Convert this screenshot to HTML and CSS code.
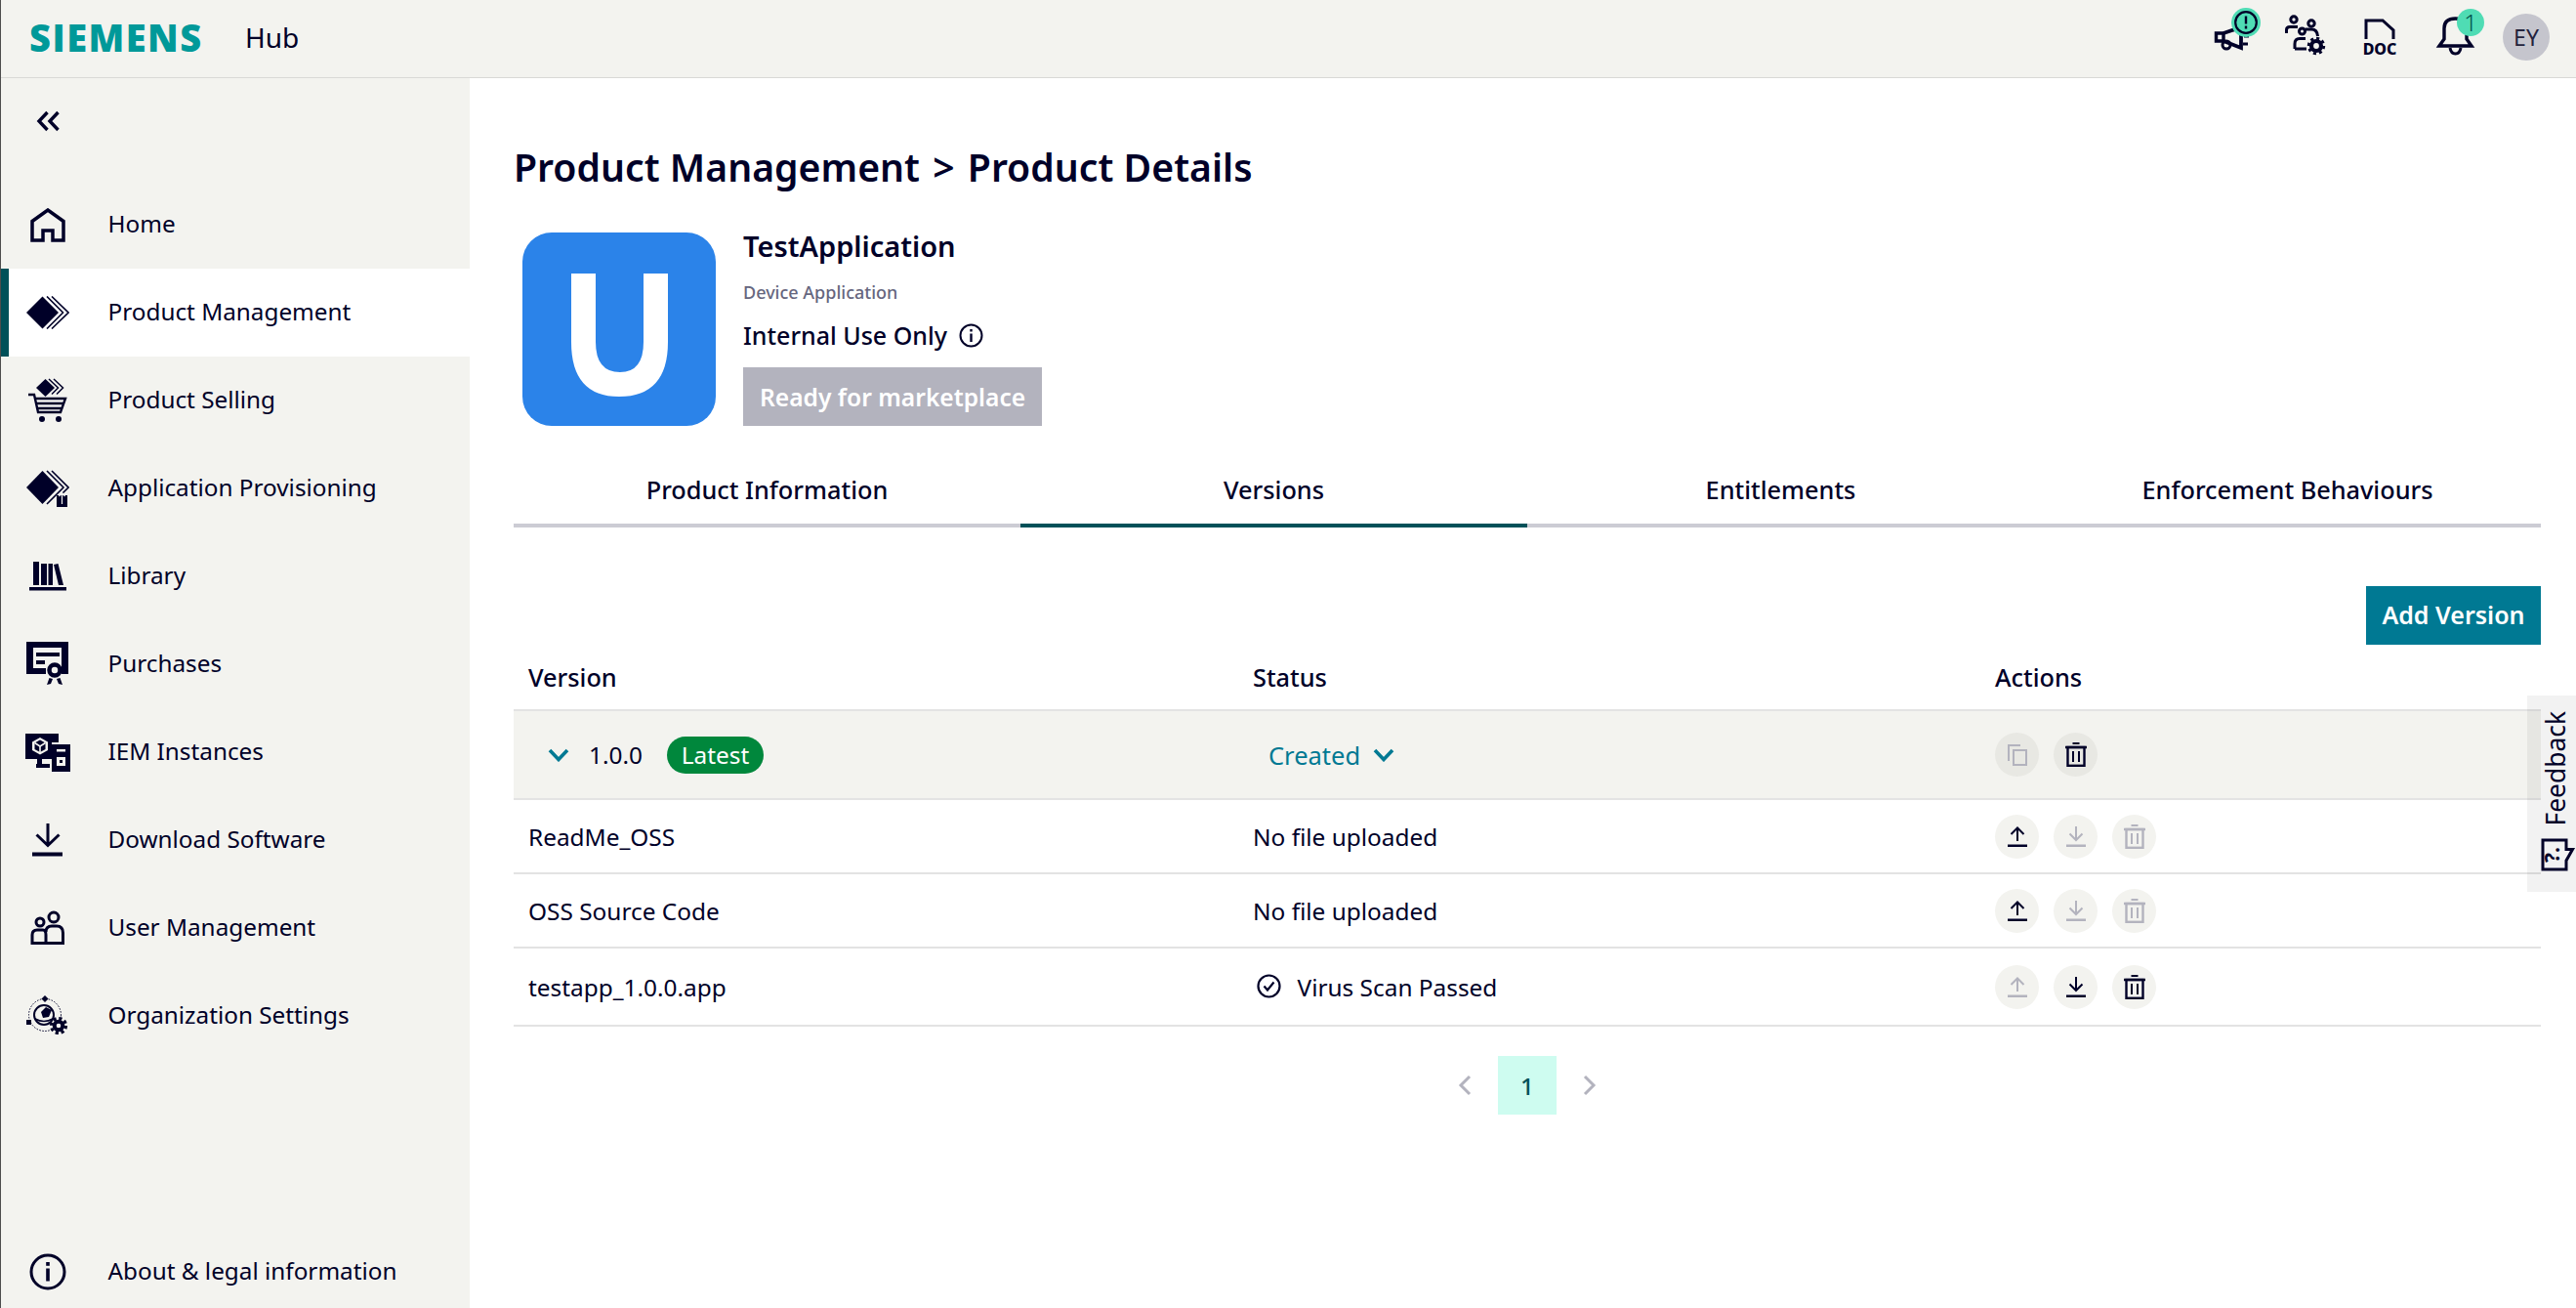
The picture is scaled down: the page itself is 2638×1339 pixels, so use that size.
FILE: index.html
```html
<!DOCTYPE html>
<html lang="en">
<head>
<meta charset="utf-8">
<title>Siemens Hub</title>
<link rel="stylesheet" href="styles.css">
</head>
<body>
<svg class="sprite" aria-hidden="true">
  <symbol id="i-upload" viewBox="0 0 20 21"><path d="M10 15V1.500M3.500 8L10 1.500L16.500 8" fill="none" stroke="currentColor" stroke-width="2"/><rect y="18.500" width="20" height="2.500" fill="currentColor"/></symbol>
  <symbol id="i-download" viewBox="0 0 20 21"><path d="M10 0V14M3.500 7.500L10 14L16.500 7.500" fill="none" stroke="currentColor" stroke-width="2"/><rect y="18.500" width="20" height="2.500" fill="currentColor"/></symbol>
  <symbol id="i-trash" viewBox="0 0 22 25"><path d="M7.500 1H14.500" stroke="currentColor" stroke-width="2"/><path d="M0 5H22" stroke="currentColor" stroke-width="2.500"/><rect x="2.500" y="5" width="17" height="18.800" fill="none" stroke="currentColor" stroke-width="2.400"/><path d="M8 9V20M14 9V20" stroke="currentColor" stroke-width="2"/></symbol>
  <symbol id="i-copy" viewBox="0 0 20 22"><path d="M13 1H1V17" fill="none" stroke="currentColor" stroke-width="2"/><rect x="6" y="6" width="13" height="15" fill="none" stroke="currentColor" stroke-width="2"/></symbol>
  <symbol id="i-chev" viewBox="0 0 22 14"><path d="M2 2L11 11.500L20 2" fill="none" stroke="currentColor" stroke-width="3.600"/></symbol>
</svg>

<div class="app">
  <header class="topbar">
    <span class="logo">SIEMENS</span>
    <span class="hub">Hub</span>
    <div class="top-icons">
      <svg class="ti ti-mega" viewBox="0 0 51 46"><path d="M4.500 27H12V35H4.500Z" fill="none" stroke="#000028" stroke-width="3.400"/><path d="M12 27L30 21V42L12 35" fill="none" stroke="#000028" stroke-width="3.800"/><circle cx="15" cy="39" r="4" fill="none" stroke="#000028" stroke-width="3"/><path d="M33 30H38M32 38H37" stroke="#000028" stroke-width="3"/><circle cx="35" cy="16" r="15" fill="#4fdcb4"/><circle cx="35" cy="16" r="10.800" fill="none" stroke="#000028" stroke-width="2.200"/><path d="M35 9.500V17.500M35 19.500V22.500" stroke="#000028" stroke-width="2.400"/></svg>
      <svg class="ti ti-people" viewBox="0 0 42 42"><g fill="none" stroke="#000028" stroke-width="3"><circle cx="9" cy="5" r="3.200"/><circle cx="27" cy="9" r="3.200"/><circle cx="17.500" cy="17" r="3"/><path d="M1.500 19V15.500Q1.500 12.500 5 12.500H13"/><path d="M21 15H27Q33 15 33.500 22"/><path d="M10 35V30Q10 24.500 15 24.500H21"/><path d="M10 35H22"/></g><circle cx="32" cy="32" r="5" fill="none" stroke="#000028" stroke-width="4.200"/><circle cx="32" cy="32" r="7.800" fill="none" stroke="#000028" stroke-width="2.800" stroke-dasharray="3.100 3"/></svg>
      <svg class="ti ti-doc" viewBox="0 0 34 40"><path d="M3 22V3H20L31 13V22" fill="none" stroke="#000028" stroke-width="3"/><text x="17" y="38" class="doc-text">DOC</text></svg>
      <svg class="ti ti-bell" viewBox="0 0 50 48"><path d="M3 38L8 31V20Q8 10 19.500 10Q31 10 31 20V31L36 38Z" fill="none" stroke="#000028" stroke-width="3.400"/><path d="M14 40Q15 46 19.500 46Q24 46 25 40" fill="none" stroke="#000028" stroke-width="3"/><circle cx="35" cy="14" r="14" fill="#4fdcb4"/><text x="35" y="23" class="bell-text">1</text></svg>
      <span class="avatar">EY</span>
    </div>
  </header>

  <div class="shell">
    <aside class="sidebar">
      <div class="collapse">
        <svg class="ic-collapse" viewBox="0 0 25 22"><path d="M11.500 2L3 11L11.500 20M22.500 2L14 11L22.500 20" fill="none" stroke="#000028" stroke-width="3.400"/></svg>
      </div>
      <nav class="nav">
        <a class="item"><span class="ic"><svg width="36" height="35" viewBox="0 0 36 35"><path d="M2 33V13.500L18 2L34 13.500V33H23V23H13V33Z" fill="none" stroke="#000028" stroke-width="3.500"/></svg></span>Home</a>
        <a class="item active"><span class="ic"><svg width="44" height="34" viewBox="0 0 44 34"><path d="M0 17L16.500 0.500L33 17L16.500 33.500Z" fill="#000028"/><path d="M21 0.500L37.500 17L21 33.500M26 0.500L43 17L26 33.500" fill="none" stroke="#000028" stroke-width="1.600"/></svg></span>Product Management</a>
        <a class="item"><span class="ic"><svg width="40" height="46" viewBox="0 0 40 46"><path d="M8 10L17.500 1L27 10L17.500 19Z" fill="#000028"/><path d="M21 1L30.500 10L24 16.500M26 1L35.500 10L29 16.500" fill="none" stroke="#000028" stroke-width="1.500"/><path d="M0 17H6L10 35H33L38 21H7M8 26H36M9 31H34" fill="none" stroke="#000028" stroke-width="2.400"/><circle cx="14" cy="42" r="3" fill="#000028"/><circle cx="31" cy="42" r="3" fill="#000028"/></svg></span>Product Selling</a>
        <a class="item"><span class="ic"><svg width="44" height="38" viewBox="0 0 44 38"><path d="M0 18L16.500 1L33 18L16.500 35Z" fill="#000028"/><path d="M21 1L38 18L21 35M26 1L43 18L36 25" fill="none" stroke="#000028" stroke-width="1.600"/><rect x="31" y="26" width="11" height="12" fill="#000028"/><path d="M36.500 35V24M33.500 27L36.500 23.500L39.500 27" fill="none" stroke="#f3f3ef" stroke-width="1.200"/></svg></span>Application Provisioning</a>
        <a class="item"><span class="ic"><svg width="38" height="30" viewBox="0 0 38 30"><g fill="#000028"><rect x="4" y="0" width="6" height="24"/><rect x="12" y="2" width="6" height="22"/><rect x="19.500" y="2" width="4.500" height="22"/><path d="M25 3L29.500 2L35 24H30Z"/><rect x="0" y="26" width="38" height="3.500"/></g></svg></span>Library</a>
        <a class="item"><span class="ic"><svg width="44" height="46" viewBox="0 0 44 46"><path d="M0 0H43V33H36V6H7V27H20V33H0Z" fill="#000028"/><path d="M10 11H34V15H10ZM10 19H19V23H10Z" fill="#000028"/><circle cx="29" cy="29" r="5.500" fill="#f3f3ef" stroke="#000028" stroke-width="4.500"/><path d="M23.500 37L21 44L25 43L27 38ZM34.500 37L37 44L33 43L31 38Z" fill="#000028"/></svg></span>Purchases</a>
        <a class="item"><span class="ic"><svg width="46" height="39" viewBox="0 0 46 39"><path d="M0 0H34V9H27V26H0Z" fill="#000028"/><rect x="12" y="26" width="5" height="6" fill="#000028"/><rect x="11" y="31" width="14" height="4" fill="#000028"/><path d="M15 4L23 8.500V17L15 21.500L7 17V8.500Z" fill="#f3f3ef"/><path d="M15 6.500L20.500 9.500V16L15 19L9.500 16V9.500Z" fill="#000028"/><path d="M9.500 9.500L15 13L20.500 9.500M15 13V19" fill="none" stroke="#f3f3ef" stroke-width="1.600"/><rect x="27" y="11" width="19" height="28" fill="#000028"/><rect x="32" y="16" width="9" height="2.500" fill="#f3f3ef"/><rect x="32" y="24" width="9" height="9" fill="#f3f3ef"/><rect x="35" y="27" width="3" height="3" fill="#000028"/></svg></span>IEM Instances</a>
        <a class="item"><span class="ic"><svg width="32" height="36" viewBox="0 0 32 36"><path d="M16 1V23M4.500 12.500L16 23.500L27.500 12.500" fill="none" stroke="#000028" stroke-width="3"/><rect y="30.500" width="31" height="4" fill="#000028"/></svg></span>Download Software</a>
        <a class="item"><span class="ic"><svg width="36" height="36" viewBox="0 0 36 36"><g fill="none" stroke="#000028" stroke-width="3"><circle cx="10" cy="12" r="4"/><circle cx="24" cy="7" r="5"/><path d="M2 33.500V25Q2 20 7 20H13Q16 20 16 25V33.500Z"/><path d="M16 22Q16 16 22 16H27Q33.500 16 33.500 23V33.500H16"/></g></svg></span>User Management</a>
        <a class="item"><span class="ic"><svg width="44" height="42" viewBox="0 0 44 42"><circle cx="19" cy="20" r="16.500" fill="none" stroke="#000028" stroke-width="1" stroke-dasharray="1.500 1.500"/><path d="M19 0L22.500 3.500L19 7L15.500 3.500Z" fill="#000028"/><rect x="0" y="25" width="5" height="5" fill="#000028"/><circle cx="18" cy="20" r="10" fill="none" stroke="#000028" stroke-width="2"/><path d="M15 17L20 12L26 15L23 22L17 23Z" fill="#000028"/><path d="M9 24Q18 29 27 24" fill="none" stroke="#000028" stroke-width="1.600"/><circle cx="33" cy="31" r="6" fill="#f3f3ef"/><circle cx="33" cy="31" r="4.300" fill="none" stroke="#000028" stroke-width="4"/><circle cx="33" cy="31" r="7.500" fill="none" stroke="#000028" stroke-width="3.200" stroke-dasharray="3.200 2.700"/></svg></span>Organization Settings</a>
      </nav>
      <a class="item about"><span class="ic"><svg width="38" height="38" viewBox="0 0 38 38"><circle cx="19" cy="19" r="17" fill="none" stroke="#000028" stroke-width="3"/><rect x="17.200" y="9" width="3.600" height="3.800" fill="#000028"/><rect x="17.200" y="15.500" width="3.600" height="13" fill="#000028"/></svg></span>About &amp; legal information</a>
    </aside>

    <main class="main">
      <h1 class="title">Product Management <span class="crumb-sep">&gt;</span> Product Details</h1>

      <section class="product">
        <div class="app-icon"><svg viewBox="0 0 198 198" width="198" height="198"><rect width="198" height="198" rx="30" fill="#2b83e9"/><path d="M50 42H75V112Q75 143 100 143Q124 143 124 112V42H149V112Q149 168 99 168Q50 168 50 112Z" fill="#fff"/></svg></div>
        <div class="product-info">
          <div class="product-name">TestApplication</div>
          <div class="product-type">Device Application</div>
          <div class="product-use">Internal Use Only
            <svg class="info" viewBox="0 0 25 25"><circle cx="12.500" cy="12.500" r="11" fill="none" stroke="#000028" stroke-width="2"/><rect x="11.300" y="6" width="2.400" height="2.500" fill="#000028"/><rect x="11.300" y="10.500" width="2.400" height="8.500" fill="#000028"/></svg>
          </div>
          <div class="ready">Ready for marketplace</div>
        </div>
      </section>

      <div class="tabs">
        <div class="tab">Product Information</div>
        <div class="tab on">Versions</div>
        <div class="tab">Entitlements</div>
        <div class="tab">Enforcement Behaviours</div>
      </div>

      <div class="toolbar"><span class="btn-add">Add Version</span></div>

      <div class="table">
        <div class="row head"><span>Version</span><span>Status</span><span>Actions</span></div>

        <div class="row parent">
          <span class="ver"><svg class="chev" viewBox="0 0 22 14"><use href="#i-chev"/></svg>1.0.0<span class="pill">Latest</span></span>
          <span class="created">Created<svg class="chev" viewBox="0 0 22 14"><use href="#i-chev"/></svg></span>
          <span class="acts">
            <span class="act dim"><svg class="g-copy"><use href="#i-copy"/></svg></span>
            <span class="act dim live"><svg class="g-trash"><use href="#i-trash"/></svg></span>
          </span>
        </div>

        <div class="row r-76">
          <span>ReadMe_OSS</span><span>No file uploaded</span>
          <span class="acts">
            <span class="act live"><svg class="g-arrow"><use href="#i-upload"/></svg></span>
            <span class="act"><svg class="g-arrow"><use href="#i-download"/></svg></span>
            <span class="act"><svg class="g-trash"><use href="#i-trash"/></svg></span>
          </span>
        </div>

        <div class="row r-76">
          <span>OSS Source Code</span><span>No file uploaded</span>
          <span class="acts">
            <span class="act live"><svg class="g-arrow"><use href="#i-upload"/></svg></span>
            <span class="act"><svg class="g-arrow"><use href="#i-download"/></svg></span>
            <span class="act"><svg class="g-trash"><use href="#i-trash"/></svg></span>
          </span>
        </div>

        <div class="row r-80">
          <span>testapp_1.0.0.app</span>
          <span class="scan"><svg class="check" viewBox="0 0 25 25"><circle cx="12.500" cy="12.500" r="11" fill="none" stroke="#000028" stroke-width="2.200"/><path d="M7.500 12.500L11 16.500L17.500 8.500" fill="none" stroke="#000028" stroke-width="2.200"/></svg>Virus Scan Passed</span>
          <span class="acts">
            <span class="act"><svg class="g-arrow"><use href="#i-upload"/></svg></span>
            <span class="act live"><svg class="g-arrow"><use href="#i-download"/></svg></span>
            <span class="act live"><svg class="g-trash"><use href="#i-trash"/></svg></span>
          </span>
        </div>
      </div>

      <div class="pager">
        <svg class="pg-arrow" viewBox="0 0 14 22"><path d="M12 2L3 11L12 20" fill="none" stroke="#b3b3be" stroke-width="3"/></svg>
        <span class="pg-num">1</span>
        <svg class="pg-arrow" viewBox="0 0 14 22"><path d="M2 2L11 11L2 20" fill="none" stroke="#b3b3be" stroke-width="3"/></svg>
      </div>
    </main>
  </div>

  <div class="feedback">
    <span class="fb-text">Feedback</span>
    <svg class="fb-icon" viewBox="0 0 34 34"><path d="M2 2H26V11.500H32.500L26 23V32H2Z" fill="none" stroke="#000028" stroke-width="3"/><text x="14" y="22" class="fb-q" transform="rotate(-90 14 17)">?.</text></svg>
  </div>
</div>
</body>
</html>
```

FILE: styles.css
```css
* { box-sizing: border-box; }

html, body {
  margin: 0;
  height: 100%;
  overflow: hidden;
}

body {
  background: #fff;
  color: #000028;
  font-family: "Noto Sans", "Open Sans", sans-serif;
  font-size: 24.3px;
}

.sprite { position: absolute; width: 0; height: 0; }

.app {
  position: relative;
  width: 2638px;
  height: 1339px;
  display: flex;
  flex-direction: column;
  border-left: 1px solid #4d4d4d;
}

/* Top bar */
.topbar {
  height: 80px;
  flex: none;
  display: flex;
  align-items: center;
  background: #f3f3ef;
  border-bottom: 1px solid #d9d9d6;
  padding-left: 29px;
}

.logo {
  width: 176px;
  flex: none;
  margin-top: -4px;
  color: #009999;
  font-family: "Open Sans", sans-serif;
  font-weight: 800;
  font-size: 38px;
  letter-spacing: 1.5px;
  line-height: 1;
  white-space: nowrap;
}

.hub {
  margin-left: 45px;
  margin-top: -4px;
  font-size: 28px;
}

.top-icons {
  margin-left: auto;
  display: flex;
  align-items: center;
  height: 100%;
  padding-right: 27px;
  padding-bottom: 3px;
}

.ti { display: block; flex: none; overflow: visible; }
.ti-mega { width: 51px; height: 46px; margin-top: -17px; }
.ti-people { width: 42px; height: 42px; margin-left: 24px; margin-top: -4px; }
.ti-doc { width: 34px; height: 40px; margin-left: 38px; }
.ti-bell { width: 50px; height: 48px; margin-left: 41px; margin-top: -10px; }

.doc-text { font-size: 16px; font-weight: 800; text-anchor: middle; fill: #000028; }
.bell-text { font-size: 24px; font-weight: 300; text-anchor: middle; fill: #00504a; }

.avatar {
  width: 48px;
  height: 48px;
  margin-left: 18px;
  border-radius: 50%;
  background: #c5c5cd;
  color: #23233c;
  font-size: 23px;
  display: flex;
  align-items: center;
  justify-content: center;
}

/* Shell */
.shell {
  flex: 1;
  min-height: 0;
  display: flex;
}

.sidebar {
  width: 480px;
  flex: none;
  background: #f3f3ef;
  display: flex;
  flex-direction: column;
}

.collapse {
  height: 105px;
  flex: none;
  padding: 33px 0 0 36px;
}

.ic-collapse { width: 25px; height: 22px; display: block; }

.nav { display: flex; flex-direction: column; }

.item {
  height: 90px;
  display: flex;
  align-items: center;
  padding-right: 10px;
  padding-bottom: 3px;
}

.ic {
  width: 109.500px;
  flex: none;
  display: flex;
  justify-content: center;
  padding-right: 13.500px;
  margin-top: 3px;
}

.ic svg { display: block; }

.item.active {
  background: #fff;
  box-shadow: inset 8px 0 0 #005159;
}

.about {
  margin-top: auto;
  height: 74px;
}

/* Main */
.main {
  flex: 1;
  min-width: 0;
  padding: 63px 36px 0 45px;
}

.title {
  margin: 0;
  font-size: 39.2px;
  font-weight: 600;
  line-height: 56px;
}

.crumb-sep { margin: 0 3px; }

.product {
  margin-top: 39px;
  display: flex;
  height: 198px;
}

.app-icon { margin-left: 9px; width: 198px; height: 198px; flex: none; }
.app-icon svg { display: block; }

.product-info {
  margin-left: 28px;
  margin-top: -1px;
  display: flex;
  flex-direction: column;
  align-items: flex-start;
}

.product-name { font-size: 29px; font-weight: 600; line-height: 30px; }
.product-type { font-size: 18px; font-weight: 500; line-height: 30px; color: #66667e; margin-top: 17px; }
.product-use {
  font-size: 25px;
  font-weight: 500;
  line-height: 30px;
  margin-top: 14px;
  display: flex;
  align-items: center;
  gap: 12px;
}
.info { width: 25px; height: 25px; }

.ready {
  margin-top: 18px;
  height: 60px;
  padding: 0 17px;
  display: flex;
  align-items: center;
  background: #b3b3be;
  color: #fff;
  font-size: 24.6px;
  font-weight: 600;
}

/* Tabs */
.tabs {
  margin-top: 31px;
  display: grid;
  grid-template-columns: repeat(4, 1fr);
}

.tab {
  height: 73px;
  border-bottom: 4px solid #ccccd4;
  padding-bottom: 2px;
  display: flex;
  align-items: center;
  justify-content: center;
  font-weight: 500;
  font-size: 25.300px;
}

.tab.on { border-bottom-color: #005159; }

.toolbar {
  margin-top: 60px;
  display: flex;
  justify-content: flex-end;
}

.btn-add {
  width: 179px;
  height: 60px;
  padding-bottom: 2px;
  background: #007993;
  color: #fff;
  font-size: 25px;
  font-weight: 600;
  display: flex;
  align-items: center;
  justify-content: center;
}

/* Table */
.row {
  display: grid;
  grid-template-columns: 742px 760px 1fr;
  align-items: center;
  padding-left: 15px;
  border-bottom: 2px solid #e3e3e3;
  font-size: 24.4px;
}

.head {
  height: 68px;
  font-weight: 500;
  font-size: 25.300px;
}

.parent {
  height: 91px;
  background: #f3f3ef;
}

.r-76 { height: 76px; }
.r-80 { height: 80px; }

.ver {
  display: flex;
  align-items: center;
  padding-left: 20px;
}

.chev { width: 22px; height: 14px; display: block; color: #007993; }
.ver .chev { margin-right: 20px; }

.pill {
  margin-left: 25px;
  width: 99px;
  height: 38px;
  border-radius: 19px;
  background: #00873c;
  color: #fff;
  display: flex;
  align-items: center;
  justify-content: center;
}

.created {
  display: flex;
  align-items: center;
  color: #007993;
  padding-left: 16px;
  font-size: 25.5px;
}
.created .chev { margin-left: 13px; }

.scan { display: flex; align-items: center; gap: 16.5px; padding-left: 4px; }
.check { width: 25px; height: 25px; display: block; margin-top: -1px; }

.acts { display: flex; gap: 15px; }

.act {
  width: 45px;
  height: 45px;
  border-radius: 50%;
  background: #f3f3ef;
  color: #b3b3be;
  display: flex;
  align-items: center;
  justify-content: center;
}
.act.dim { background: #e8e8e3; }
.act.live { color: #000028; }

.g-arrow { width: 20px; height: 21px; display: block; }
.g-trash { width: 22px; height: 25px; display: block; }
.g-copy { width: 20px; height: 22px; display: block; }

/* Pager */
.pager {
  margin-top: 30px;
  display: flex;
  justify-content: center;
  align-items: center;
  gap: 27px;
}
.pg-arrow { width: 14px; height: 22px; display: block; }
.pg-num {
  width: 60px;
  height: 60px;
  background: #cefcf0;
  color: #005159;
  font-weight: 500;
  display: flex;
  align-items: center;
  justify-content: center;
}

/* Feedback */
.feedback {
  position: absolute;
  top: 712px;
  right: 0;
  width: 50px;
  height: 201px;
  background: rgba(0, 0, 0, 0.05);
  display: flex;
  flex-direction: column;
  align-items: center;
  padding: 16px 0 0 7px;
}
.fb-text {
  writing-mode: vertical-rl;
  transform: rotate(180deg);
  font-size: 26.400px;
  line-height: 30px;
}
.fb-icon { width: 34px; height: 34px; margin-top: 12px; margin-left: 4px; overflow: visible; flex: none; }
.fb-q { font-size: 21px; font-weight: 700; text-anchor: middle; fill: #000028; }
```
